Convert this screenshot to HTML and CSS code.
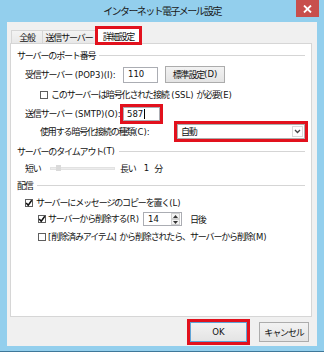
FILE: index.html
```html
<!DOCTYPE html>
<html lang="ja">
<head>
<meta charset="utf-8">
<title>インターネット電子メール設定</title>
<link rel="stylesheet" href="styles.css">
</head>
<body>
<div class="window">
  <div class="titlebar">
    <div class="spacer"></div>
    <div class="title">インターネット電子メール設定</div>
    <div class="close"><svg width="9" height="8" viewBox="0 0 9 8"><path d="M1 0.5 L8 7.5 M8 0.5 L1 7.5" stroke="#fff" stroke-width="1.8"/></svg></div>
  </div>
  <div class="client">
    <div class="tabs">
      <div class="tab t1">全般</div>
      <div class="tab t2">送信サーバー</div>
      <div class="tab active">詳細設定</div>
    </div>
    <div class="panel">
      <div class="group">サーバーのポート番号</div>
      <div class="row r-pop">
        <span class="lbl w-port">受信サーバー<span class="en"> (POP3)(I):</span></span>
        <span class="field f-pop en">110</span>
        <span class="btn btn-small">標準設定<span class="en">(D)</span></span>
      </div>
      <div class="row r-ssl">
        <span class="cb"></span>
        <span>このサーバーは暗号化された接続<span class="en"> (SSL) </span>が必要<span class="en">(E)</span></span>
      </div>
      <div class="row r-smtp">
        <span class="lbl w-port">送信サーバー<span class="en"> (SMTP)(O):</span></span>
        <span class="field f-smtp mark en">587<span class="caret"></span></span>
      </div>
      <div class="row r-enc">
        <span class="lbl w-enc">使用する暗号化接続の種類<span class="en">(C):</span></span>
        <span class="combo mark">
          <span class="combo-text">自動</span>
          <span class="combo-arrow"><svg width="7" height="5" viewBox="0 0 7 5"><path d="M1 1 L3.5 3.5 L6 1" fill="none" stroke="#444" stroke-width="1.3"/></svg></span>
        </span>
      </div>
      <div class="group">サーバーのタイムアウト<span class="en">(T)</span></div>
      <div class="row r-timeout">
        <span class="w-short">短い</span>
        <span class="slider"><span class="thumb"></span></span>
        <span class="long">長い</span>
        <span class="num en">1</span>
        <span>分</span>
      </div>
      <div class="group">配信</div>
      <div class="row r-copy">
        <span class="cb"><svg width="8" height="8" viewBox="0 0 8 8"><path d="M1.2 4 L3.2 6.2 L6.8 1.3" fill="none" stroke="#111" stroke-width="1.5"/></svg></span>
        <span>サーバーにメッセージのコピーを置く<span class="en">(L)</span></span>
      </div>
      <div class="row r-del">
        <span class="cb"><svg width="8" height="8" viewBox="0 0 8 8"><path d="M1.2 4 L3.2 6.2 L6.8 1.3" fill="none" stroke="#111" stroke-width="1.5"/></svg></span>
        <span class="lbl w-del">サーバーから削除する<span class="en">(R)</span></span>
        <span class="spin">
          <span class="spin-text en">14</span>
          <span class="spin-btns">
            <span class="spin-btn"><svg width="5" height="3" viewBox="0 0 5 3"><path d="M0 3 L2.5 0 L5 3Z" fill="#333"/></svg></span>
            <span class="spin-btn"><svg width="5" height="3" viewBox="0 0 5 3"><path d="M0 0 L2.5 3 L5 0Z" fill="#333"/></svg></span>
          </span>
        </span>
        <span class="days">日後</span>
      </div>
      <div class="row r-trash">
        <span class="cb"></span>
        <span><span class="en">[</span>削除済みアイテム<span class="en">] </span>から削除されたら、サーバーから削除<span class="en">(M)</span></span>
      </div>
    </div>
    <div class="buttons">
      <span class="btn btn-ok mark en">OK</span>
      <span class="btn btn-cancel">キャンセル</span>
    </div>
  </div>
</div>
</body>
</html>
```
FILE: styles.css
```css
* { box-sizing: border-box; }
html, body { margin: 0; padding: 0; }
body {
  width: 324px;
  height: 352px;
  overflow: hidden;
  background: #fff;
  font-family: "Noto Sans CJK JP", "Noto Sans", sans-serif;
  font-size: 9px;
  letter-spacing: -1.15px;
  color: #111;
}
.en {
  font-family: "DejaVu Sans", "Noto Sans", sans-serif;
  font-size: 8.5px;
  letter-spacing: 0;
}
.window {
  width: 324px;
  height: 352px;
  background: #93cfed;
  display: flex;
  flex-direction: column;
  padding: 0 7px 5px 7px;
  border-bottom: 1px solid #3f7899;
}
.titlebar {
  height: 22px;
  display: flex;
  align-items: flex-start;
  flex: none;
}
.spacer { width: 21px; }
.title {
  flex: 1;
  text-align: center;
  line-height: 21px;
  font-size: 10px;
  letter-spacing: -1.6px;
  color: #1a1a1a;
}
.close {
  width: 23px;
  height: 17px;
  margin-right: -2px;
  background: #c84f4c;
  display: flex;
  align-items: center;
  justify-content: center;
}
.client {
  flex: 1;
  background: #f0f0f0;
  display: flex;
  flex-direction: column;
  padding: 5px 5px 0 3px;
}
.tabs {
  display: flex;
  align-items: flex-end;
  height: 16px;
  padding-left: 1px;
  position: relative;
  z-index: 2;
}
.tab {
  height: 13px;
  border: 1px solid #d6d6d6;
  border-bottom: none;
  background: linear-gradient(#f3f3f3, #e8e8e8);
  display: flex;
  align-items: center;
  justify-content: center;
  line-height: 1;
}
.t1 { width: 32px; }
.t2 { width: 53px; border-left: none; }
.tab.active {
  width: 45px;
  height: 17px;
  margin-bottom: -1px;
  background: #fff;
  outline: 3px solid #e2111d;
  outline-offset: -2px;
}
.panel {
  height: 274px;
  background: #fff;
  border: 1px solid #d6d6d6;
  padding: 5px 6px 0 6px;
  display: flex;
  flex-direction: column;
}
.group {
  height: 12px;
  display: flex;
  align-items: center;
  line-height: 1;
  white-space: nowrap;
}
.group::after {
  content: "";
  flex: 1;
  height: 1px;
  background: #d5d5d5;
  margin-left: 4px;
}
.row {
  display: flex;
  align-items: center;
  line-height: 1;
  white-space: nowrap;
}
.lbl { flex: none; }
.r-pop { height: 17px; margin-top: 5px; padding-left: 8px; }
.w-port { width: 98px; }
.field {
  height: 16px;
  border: 1px solid #abadb3;
  background: #fff;
  display: flex;
  align-items: center;
  padding-left: 4px;
}
.f-pop { width: 35px; }
.btn {
  display: flex;
  align-items: center;
  justify-content: center;
  border: 1px solid #acacac;
  background: linear-gradient(#f2f2f2, #e4e4e4);
  line-height: 1;
}
.btn-small { width: 60px; height: 17px; margin-left: 7px; }
.r-ssl { height: 12px; margin-top: 6px; padding-left: 23px; }
.cb {
  width: 8px;
  height: 8px;
  border: 1px solid #5e5e5e;
  background: #fff;
  margin-right: 3px;
  flex: none;
  display: flex;
  align-items: center;
  justify-content: center;
}
.cb svg { flex: none; }
.r-smtp { height: 14px; margin-top: 6px; padding-left: 8px; }
.f-smtp { width: 37px; height: 14px; padding-left: 3px; }
.mark { outline: 3px solid #e2111d; }
.caret {
  display: inline-block;
  width: 1px;
  height: 10px;
  background: #000;
  margin-left: 1px;
}
.r-enc { height: 15px; margin-top: 3px; padding-left: 23px; }
.w-enc { width: 137px; }
.combo {
  width: 128px;
  height: 15px;
  border: 1px solid #acacac;
  background: #fff;
  display: flex;
  align-items: center;
  padding-left: 3px;
}
.combo-text { flex: 1; }
.combo-arrow {
  width: 11px;
  height: 11px;
  margin-right: 1px;
  border: 1px solid #d9d9d9;
  display: flex;
  align-items: center;
  justify-content: center;
}
.r-enc + .group { margin-top: 6px; }
.r-timeout { height: 12px; margin-top: 5px; padding-left: 8px; }
.w-short { width: 25px; }
.slider {
  width: 65px;
  height: 3px;
  background: #ececec;
  border: 1px solid #e2e2e2;
  display: flex;
  align-items: center;
}
.thumb {
  width: 5px;
  height: 6px;
  margin-left: 5px;
  background: #dadada;
}
.long { margin-left: 5px; }
.num { margin-left: 8px; margin-right: 5px; }
.r-timeout + .group { margin-top: 5px; }
.r-copy { height: 12px; margin-top: 6px; padding-left: 8px; }
.r-del { height: 14px; margin-top: 3px; padding-left: 21px; }
.r-del .cb { margin-right: 2px; }
.w-del { width: 95px; }
.spin {
  width: 39px;
  height: 14px;
  border: 1px solid #abadb3;
  display: flex;
  align-items: center;
}
.spin-text { flex: 1; padding-left: 4px; }
.spin-btns {
  width: 9px;
  height: 12px;
  display: flex;
  flex-direction: column;
  margin-right: 1px;
}
.spin-btn {
  flex: 1;
  border: 1px solid #d0d0d0;
  background: #f3f3f3;
  display: flex;
  align-items: center;
  justify-content: center;
}
.days { margin-left: 8px; }
.r-trash { height: 12px; margin-top: 5px; padding-left: 21px; }
.r-trash .cb { margin-right: 2px; }
.buttons {
  display: flex;
  justify-content: flex-end;
  margin-top: 5px;
  padding-right: 3px;
}
.btn-ok {
  width: 57px;
  height: 20px;
  border-color: #5fa3d6;
}
.btn-cancel {
  width: 50px;
  height: 20px;
  margin-left: 12px;
}
```
